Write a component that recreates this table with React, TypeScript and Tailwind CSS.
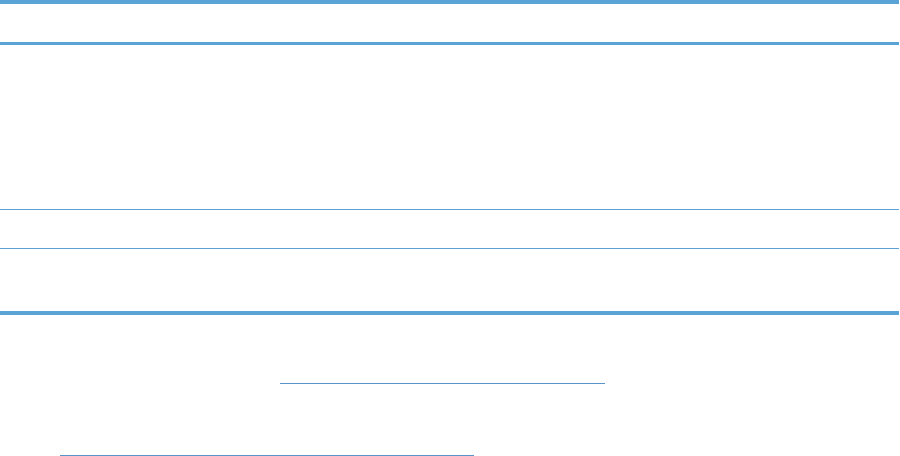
export default function App() {
  return (
    <div className="w-[900px] h-[456px] bg-white overflow-hidden" style={{ fontFamily: '"Liberation Sans", Arial, sans-serif' }}>
      <div className="w-[899px]">
        <div className="h-[4px] bg-[#5aa3d6]" />
        <div className="h-[38px]" />
        <div className="h-[3px] bg-[#5aa3d6]" />
        <div className="h-[164px]" />
        <div className="h-px bg-[#5ba1d4]" />
        <div className="h-[38px]" />
        <div className="h-px bg-[#5ba1d4]" />
        <div className="h-[62px]" />
        <div className="h-[4px] bg-[#5aa3d6]" />
      </div>
      <div className="h-[68px]" />
      <div className="ml-[280px] w-[325px] h-px bg-[#5a95c9]" />
      <div className="h-[71px]" />
      <div className="ml-[60px] w-[414px] h-px bg-[#5a95c9]" />
    </div>
  );
}
